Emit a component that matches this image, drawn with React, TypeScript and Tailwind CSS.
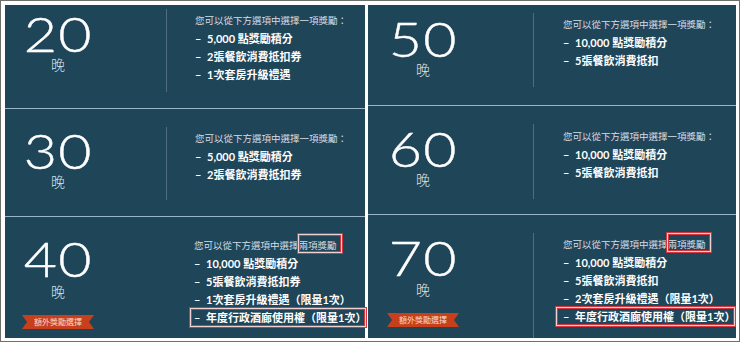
import React from 'react';

type Item = { text: string; boxed?: boolean };

interface RowProps {
  num: string;
  h?: string;
  numPt: string;
  wanMt: string;
  badge?: boolean;
  divMt: string;
  divH?: string;
  textPt: string;
  twoPick?: boolean;
  colon?: boolean;
  items: Item[];
  numW: string;
  textMl: string;
  boxLeft: string;
}

const boxCls = 'absolute border border-[#d0393f] shadow-[inset_0_0_0_1px_#f4cfd0,inset_0_0_0_2px_#d0393f]';

const Row: React.FC<RowProps> = (p) => (
  <div className={`flex ${p.h ?? 'flex-1'} ${p.h ? 'border-b border-[#9db6c7]' : ''}`}>
    <div className={`${p.numW} shrink-0 flex flex-col items-center ${p.numPt}`}>
      <div className="text-[47px] leading-[40px] font-light text-white scale-x-[1.22] tracking-[1px] [-webkit-text-stroke:0.4px_white]">{p.num}</div>
      <div className={`text-[14px] leading-[14px] text-[#dde4e8] font-light ${p.wanMt}`}>晚</div>
      {p.badge && (
        <div className="mt-[16px] w-[72px] h-[14px] bg-[#c8401b] flex items-center justify-center text-[8px] text-[#f6d9c8] [clip-path:polygon(0_0,100%_0,calc(100%-5px)_50%,100%_100%,0_100%,5px_50%)]">
          額外獎勵選擇
        </div>
      )}
    </div>
    <div className={`ml-[55px] w-px bg-[#4f6d7f] ${p.divMt} ${p.divH ?? 'self-stretch'}`} />
    <div className={`${p.textMl} ${p.textPt}`}>
      <div className="text-[9.5px] leading-[18px] text-[#d6dee3] whitespace-nowrap">
        您可以從下方選項中選擇
        {p.twoPick ? (
          <>
            <span className="relative">
              兩項獎勵
              <span className={`${boxCls} -left-[2px] -right-[6px] -top-[7px] -bottom-[3px]`} />
            </span>
            {p.colon ? '：' : ''}
          </>
        ) : (
          '一項獎勵：'
        )}
      </div>
      {p.items.map((it) => (
        <div key={it.text} className="text-[11px] leading-[18px] font-bold text-white whitespace-nowrap">
          <span className="relative inline-block">
            <span className="inline-block w-[12px]">–</span>
            {it.text}
            {it.boxed && <span className={`${boxCls} ${p.boxLeft} -right-[1px] -top-[2px] -bottom-[1px]`} />}
          </span>
        </div>
      ))}
    </div>
  </div>
);

export default function App() {
  return (
    <div className="w-[740px] h-[342px] border border-[#6e6e6e] bg-white pt-[4px] pl-[4px] pr-[3px] pb-[3px] flex gap-[3px] font-[Lato,'Noto_Sans_CJK_TC',sans-serif] overflow-hidden">
      <div className="w-[360px] bg-[#1f4559] flex flex-col">
        <Row
          num="20" h="h-[104px]" numW="w-[106px]" textMl="ml-[28px]" boxLeft="-left-[5px]"
          numPt="pt-[9px]" wanMt="mt-[4px]" divMt="mt-[4px]" divH="h-[83px]" textPt="pt-[7px]"
          items={[{ text: '5,000 點獎勵積分' }, { text: '2張餐飲消費抵扣券' }, { text: '1次套房升級禮遇' }]}
        />
        <Row
          num="30" h="h-[108px]" numW="w-[106px]" textMl="ml-[28px]" boxLeft="-left-[5px]"
          numPt="pt-[22px]" wanMt="mt-[4px]" divMt="mt-[18px]" divH="h-[73px]" textPt="pt-[21px]"
          items={[{ text: '5,000 點獎勵積分' }, { text: '2張餐飲消費抵扣券' }]}
        />
        <Row
          num="40" numW="w-[106px]" textMl="ml-[28px]" boxLeft="-left-[5px]"
          numPt="pt-[22px]" wanMt="mt-[6px]" badge divMt="mt-[16px]" textPt="pt-[20px]" twoPick
          items={[
            { text: '10,000 點獎勵積分' },
            { text: '5張餐飲消費抵扣券' },
            { text: '1次套房升級禮遇（限量1次）' },
            { text: '年度行政酒廊使用權（限量1次）', boxed: true },
          ]}
        />
      </div>
      <div className="flex-1 bg-[#1f4559] flex flex-col">
        <Row
          num="50" h="h-[101px]" numW="w-[110px]" textMl="ml-[29px]" boxLeft="-left-[8px]"
          numPt="pt-[14px]" wanMt="mt-[4px]" divMt="mt-[8px]" divH="h-[74px]" textPt="pt-[11px]"
          items={[{ text: '10,000 點獎勵積分' }, { text: '5張餐飲消費抵扣' }]}
        />
        <Row
          num="60" h="h-[109px]" numW="w-[110px]" textMl="ml-[29px]" boxLeft="-left-[8px]"
          numPt="pt-[23px]" wanMt="mt-[4px]" divMt="mt-[18px]" divH="h-[75px]" textPt="pt-[22px]"
          items={[{ text: '10,000 點獎勵積分' }, { text: '5張餐飲消費抵扣' }]}
        />
        <Row
          num="70" numW="w-[110px]" textMl="ml-[29px]" boxLeft="-left-[8px]"
          numPt="pt-[23px]" wanMt="mt-[5px]" badge divMt="mt-[18px]" textPt="pt-[21px]" twoPick colon
          items={[
            { text: '10,000 點獎勵積分' },
            { text: '5張餐飲消費抵扣' },
            { text: '2次套房升級禮遇（限量1次）' },
            { text: '年度行政酒廊使用權（限量1次）', boxed: true },
          ]}
        />
      </div>
    </div>
  );
}
